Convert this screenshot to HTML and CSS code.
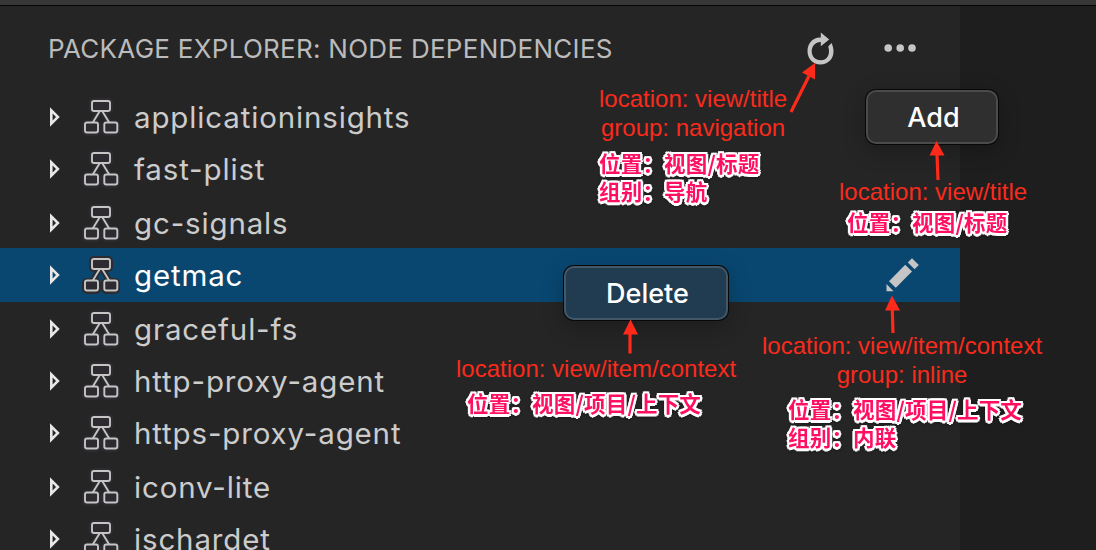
FILE: index.html
```html
<!DOCTYPE html>
<html lang="zh-CN">
<head>
<meta charset="utf-8">
<title>Package Explorer</title>
<link rel="stylesheet" href="styles.css">
</head>
<body>
<svg class="defs" width="0" height="0" aria-hidden="true">
  <symbol id="chevron" viewBox="0 0 12 20"><path d="M2.300 3.400V16.600L8.900 10Z" fill="none" stroke="#e8e8e8" stroke-width="2.600"/></symbol>
  <symbol id="dep" viewBox="0 0 40 40">
    <g fill="#2d2b30" stroke="#2d2b30" stroke-width="6" stroke-linejoin="round"><rect x="11" y="4" width="18" height="10" rx="2"/><rect x="4" y="26" width="13" height="10" rx="2"/><rect x="23" y="26" width="13" height="10" rx="2"/><path d="M18.5 14 11.5 26M21.5 14 28.500 26" fill="none"/></g>
    <g fill="#2d2b30" stroke="#c5c5c5" stroke-width="1.9"><path d="M18.800 14 11.500 26M21.200 14 28.500 26" fill="none"/><rect x="11" y="4" width="18" height="10" rx="2"/><rect x="4" y="25.500" width="13" height="10" rx="2"/><rect x="23.300" y="25.500" width="13" height="10" rx="2"/></g>
  </symbol>
</svg>
<div class="window">
  <div class="topbar"></div>
  <div class="workspace">
    <main class="panel">
      <header class="panel-head">
        <h1>PACKAGE EXPLORER: NODE DEPENDENCIES</h1>
        <svg class="refresh" viewBox="0 0 36 40"><path d="M18 7.500C10 7.500 5.500 14 5.500 21 5.500 29 11 34.500 18.500 34.500 26 34.500 31.500 29 31.500 21.500 31.500 18 30.500 15 29.500 13L26.200 16.500C28.500 23.500 26 30.300 18.500 30.300 13.500 30.300 9.700 26.500 9.700 21.300 9.700 16 13 12.200 18.800 11.900V16.300L27.200 9.400 18.800 2.500V7.500Z" fill="#c5c5c5"/></svg>
        <svg class="more" viewBox="0 0 32 8"><g fill="#c5c5c5"><circle cx="4.200" cy="4" r="3.800"/><circle cx="16.200" cy="4" r="3.800"/><circle cx="28" cy="4" r="3.800"/></g></svg>
      </header>
      <ul class="tree">
        <li class="row"><svg class="chev"><use href="#chevron"/></svg><svg class="dep"><use href="#dep"/></svg><span>applicationinsights</span></li>
        <li class="row tall"><svg class="chev"><use href="#chevron"/></svg><svg class="dep"><use href="#dep"/></svg><span>fast-plist</span></li>
        <li class="row"><svg class="chev"><use href="#chevron"/></svg><svg class="dep"><use href="#dep"/></svg><span>gc-signals</span></li>
        <li class="row tall selected"><svg class="chev"><use href="#chevron"/></svg><svg class="dep"><use href="#dep"/></svg><span>getmac</span>
          <svg class="pencil" viewBox="0 0 34 36"><g fill="#c5c5c5"><path d="M22.800 5.500 27 1.300 33.800 8 29.600 12.200Z"/><path d="M20.200 7.800 27 14.600 10.800 30.800 4 24.200Z"/><path d="M1.500 27 8.500 34.200H1.500Z"/></g></svg></li>
        <li class="row"><svg class="chev"><use href="#chevron"/></svg><svg class="dep"><use href="#dep"/></svg><span>graceful-fs</span></li>
        <li class="row"><svg class="chev"><use href="#chevron"/></svg><svg class="dep"><use href="#dep"/></svg><span>http-proxy-agent</span></li>
        <li class="row tall"><svg class="chev"><use href="#chevron"/></svg><svg class="dep"><use href="#dep"/></svg><span>https-proxy-agent</span></li>
        <li class="row"><svg class="chev"><use href="#chevron"/></svg><svg class="dep"><use href="#dep"/></svg><span>iconv-lite</span></li>
        <li class="row"><svg class="chev"><use href="#chevron"/></svg><svg class="dep"><use href="#dep"/></svg><span>ischardet</span></li>
      </ul>
    </main>
    <aside class="editor"></aside>
  </div>

  <div class="popup popup-add">Add</div>
  <div class="popup popup-delete">Delete</div>

  <svg class="arrows" viewBox="0 0 1096 550">
    <g stroke="#ff2a1a" stroke-width="3.200"><path d="M791 112 809 76M938 180 937 154M630 353.500V333M893 333 892.300 309"/></g>
    <g fill="#ff2a1a"><path d="M815 63 802 72.500 815 79.500Z"/><path d="M936.500 141 929.500 155.500H944.500Z"/><path d="M630.500 319.500 623 334.500H638Z"/><path d="M892 295.500 885 310.500H900Z"/></g>
  </svg>

  <div class="note note-nav"><p class="en">location: view/title<br>group: navigation</p><p class="zh">位置：视图/标题<br>组别：导航</p></div>
  <div class="note note-title"><p class="en">location: view/title</p><p class="zh">位置：视图/标题</p></div>
  <div class="note note-context"><p class="en">location: view/item/context</p><p class="zh">位置：视图/项目/上下文</p></div>
  <div class="note note-inline"><p class="en">location: view/item/context<br>group: inline</p><p class="zh">位置：视图/项目/上下文<br>组别：内联</p></div>
</div>
</body>
</html>
```
FILE: styles.css
```css
* { box-sizing: border-box; margin: 0; padding: 0; }
body { overflow: hidden; background: #1e1e1e; font-family: Inter, "Noto Sans CJK SC", sans-serif; }
.defs { position: absolute; }
.window { position: relative; display: flex; flex-direction: column; width: 1096px; height: 550px; overflow: hidden; }
.topbar { flex: none; height: 6px; background: #373737; border-bottom: 1px solid #050505; }
.workspace { flex: 1; display: flex; min-height: 0; }
.panel { width: 960px; background: #252526; overflow: hidden; }
.editor { flex: 1; background: #1e1e1e; }
.panel-head { display: flex; align-items: center; height: 84px; padding-left: 48px; }
.panel-head h1 { width: 754px; padding-top: 2px; font-size: 26px; font-weight: 400; line-height: 32px; letter-spacing: .28px; color: #bbb; white-space: nowrap; }
.refresh { width: 36px; height: 40px; margin: 4px 46px 0 0; }
.more { width: 32px; height: 8px; }
.tree { list-style: none; }
.row { display: flex; align-items: center; height: 52px; padding: 2px 0 0 49px; color: #ccc; font-size: 29.5px; line-height: 40px; letter-spacing: .85px; }
.row.tall { height: 54px; padding-top: 0; }
.row.selected { background: #094771; color: #fff; }
.chev { width: 12px; height: 20px; margin-right: 20px; }
.dep { width: 40px; height: 40px; margin-right: 13px; }
.pencil { width: 34px; height: 36px; margin: 0 41px 0 auto; }
.popup { position: absolute; display: flex; align-items: center; justify-content: center; padding-left: 3px; border: 2px solid #4b4b4c; border-radius: 10px; color: #fff; font-size: 27px; font-weight: 500; box-shadow: 0 0 0 1px #080808, 0 6px 22px rgba(0,0,0,.28); }
.popup-add { left: 866px; top: 90px; width: 132px; height: 54px; background: #2f2f30; }
.popup-delete { left: 564px; top: 266px; width: 164px; height: 54px; background: #213c50; border-color: #425869; }
.arrows { position: absolute; left: 0; top: 0; width: 1096px; height: 550px; }
.note { position: absolute; white-space: nowrap; }
.en { font: 24px/29px "Liberation Sans", Arial, sans-serif; color: #f92b1c; text-align: center; }
.zh { font: 700 21.500px/28px "Noto Sans CJK SC", sans-serif; letter-spacing: .2px; color: #ff0f62; text-shadow: 2.5px 0 #fff, -2.5px 0 #fff, 0 2.5px #fff, 0 -2.5px #fff, 1.8px 1.8px #fff, -1.8px 1.8px #fff, 1.8px -1.8px #fff, -1.8px -1.8px #fff, 1px 0 #fff, -1px 0 #fff, 0 1px #fff, 0 -1px #fff; filter: drop-shadow(0 1px 1px rgba(0,0,0,.3)); }
.note-nav { left: 599px; top: 84px; }
.note-nav .zh { margin-top: 7px; }
.note-title { left: 839px; top: 177px; }
.note-title .zh { margin: 2px 0 0 8px; }
.note-context { left: 456px; top: 354px; }
.note-context .zh { margin: 6px 0 0 11px; }
.note-inline { left: 762px; top: 331px; }
.note-inline .zh { margin: 6px 0 0 26px; }
```
